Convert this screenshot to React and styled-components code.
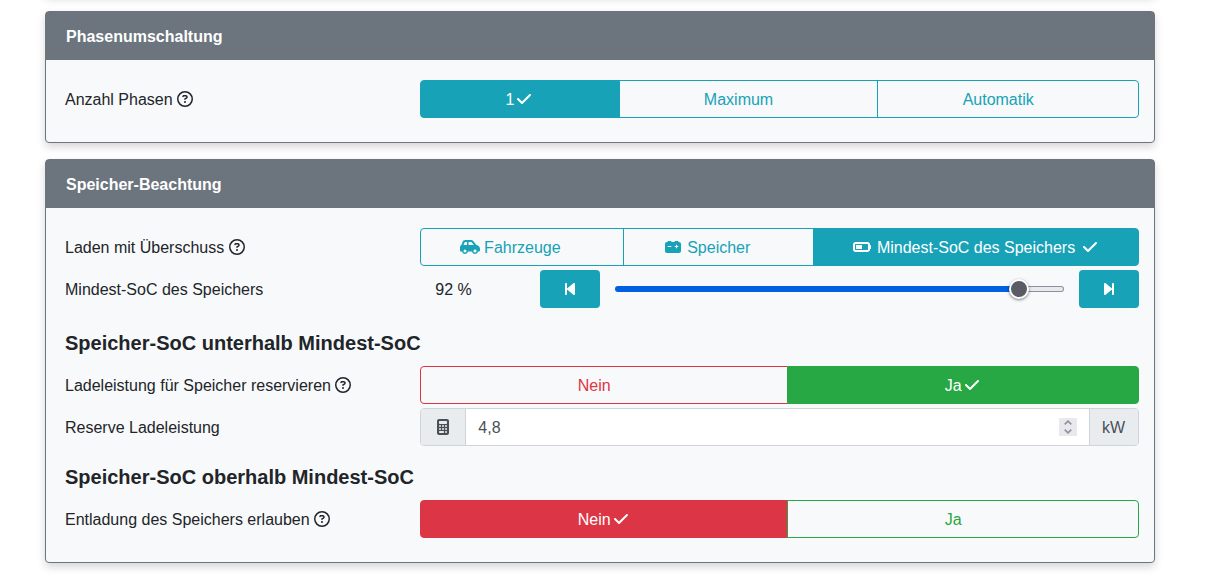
import React, { useState } from 'react';
import styled, { createGlobalStyle } from 'styled-components';
import {
    FaBackwardStep,
    FaBatteryHalf,
    FaCalculator,
    FaCarBattery,
    FaCarSide,
    FaCheck,
    FaForwardStep,
    FaRegCircleQuestion,
} from 'react-icons/fa6';

const GlobalStyle = createGlobalStyle`
    *, *::before, *::after {
        box-sizing: border-box;
    }
    body {
        margin: 0;
        background: #fff;
        color: #212529;
        font: 16px/24px "Liberation Sans", Arial, sans-serif;
        overflow: hidden;
    }
    button, input {
        font: inherit;
        margin: 0;
    }
`

const colors = {
    info: '#17a2b8',
    danger: '#dc3545',
    success: '#28a745',
}

const Page = styled.main`
    max-width: 1200px;
    padding: 0 45px;
`

const Card = styled.section`
    margin-bottom: 16px;
    border: 1px solid #6c757d;
    border-radius: 4px;
    background: #f8f9fa;
    box-shadow: 0 4px 8px rgba(0, 0, 0, 0.16);
`

const CardEnd = styled(Card)`
    height: 8px;
    margin-top: -13px;
`

const CardHeader = styled.h2`
    margin: 0;
    padding: 13px 20px 11px;
    background: #6c757d;
    color: #fff;
    font-size: 16px;
    line-height: 24px;
    font-weight: bold;
`

const CardBody = styled.div`
    padding: 20px 15px;
`

const Row = styled.div`
    display: grid;
    grid-template-columns: minmax(0, 1fr) minmax(0, 2fr);
    align-items: center;
    margin-bottom: ${props => props.$wide ? '8px' : '4px'};
`

const Label = styled.label`
    padding: 2px 4px 0;

    svg {
        vertical-align: -2px;
    }
`

const SubHeading = styled.h3`
    margin: 0;
    padding: 14px 4px 10px;
    font-size: 20px;
    line-height: 26px;
    font-weight: bold;
`

const ButtonGroup = styled.div`
    display: flex;
`

const ToggleButton = styled.button`
    flex: 1 1 auto;
    padding: 7px 12px 5px;
    border: 1px solid ${props => colors[props.$color]};
    background: ${props => props.$active ? colors[props.$color] : 'transparent'};
    color: ${props => props.$active ? '#fff' : colors[props.$color]};
    line-height: 24px;
    text-align: center;
    white-space: pre;
    cursor: pointer;

    &:not(:first-child) {
        margin-left: -1px;
    }
    &:first-child {
        border-radius: 4px 0 0 4px;
    }
    &:last-child {
        border-radius: 0 4px 4px 0;
    }
`

const Icon = styled.span`
    display: inline-flex;
    width: 20px;
    vertical-align: -2px;
    visibility: ${props => props.$hidden ? 'hidden' : 'visible'};

    svg {
        width: 20px;
        height: 16px;
    }
`

const RangeGroup = styled.div`
    display: grid;
    grid-template-columns: 2fr 1fr 8fr 1fr;
    align-items: center;
`

const RangeValue = styled.output`
    padding: 2px 15px 0;
`

const StepButton = styled.button`
    display: flex;
    align-items: center;
    justify-content: center;
    height: 38px;
    border: 0;
    border-radius: 4px;
    background: ${colors.info};
    color: #fff;
    cursor: pointer;
`

const RangeCell = styled.div`
    display: flex;
    padding: 0 15px;
`

const Range = styled.input`
    appearance: none;
    width: 100%;
    height: 24px;
    background: transparent;

    &::-webkit-slider-runnable-track {
        height: 6px;
        border: 1px solid transparent;
        border-radius: 3px;
        background:
            linear-gradient(#0060df, #0060df) 0 0 / var(--fill) 100% no-repeat border-box,
            linear-gradient(#e9e9ed, #e9e9ed) padding-box,
            linear-gradient(#8f8f9d, #8f8f9d) border-box;
    }
    &::-webkit-slider-thumb {
        appearance: none;
        width: 20px;
        height: 20px;
        margin-top: -8px;
        border: 2px solid #fff;
        border-radius: 50%;
        background: #5b5b66;
        box-shadow: 0 1px 3px rgba(0, 0, 0, 0.5);
    }
`

const InputGroup = styled.div`
    display: flex;
    height: 38px;
    border: 1px solid #ced4da;
    border-radius: 4px;
    background: #fff;
    color: #495057;
    overflow: hidden;
`

const Addon = styled.span`
    display: flex;
    align-items: center;
    padding: 0 12px;
    background: #e9ecef;

    &:first-child {
        border-right: 1px solid #ced4da;
    }
    &:last-child {
        min-width: 49px;
        padding-top: 2px;
        border-left: 1px solid #ced4da;
    }
`

const NumberInput = styled.input`
    flex: 1;
    min-width: 0;
    padding: 2px 12px 0;
    border: 0;
    outline: 0;
    background: transparent;
    color: inherit;
`

const Spinner = styled.div`
    display: flex;
    flex-direction: column;
    align-self: center;
    margin-right: 12px;
    background: #e9e9ed;
`

const SpinButton = styled.button`
    display: flex;
    align-items: center;
    justify-content: center;
    width: 18px;
    height: 9px;
    padding: 0;
    border: 0;
    background: transparent;
    color: #8f8f9d;
`

const Toggle = ({ label, options, initial }) => {
    const [selected, setSelected] = useState(initial)

    return (
        <ButtonGroup role="group" aria-label={label}>
            {options.map(({ text, color = 'info', icon: Glyph }, index) => (
                <ToggleButton
                    key={text}
                    type="button"
                    $color={color}
                    $active={index === selected}
                    aria-pressed={index === selected}
                    onClick={() => setSelected(index)}
                >
                    {Glyph && <Icon><Glyph /></Icon>}
                    {Glyph ? ` ${text} ` : text}
                    <Icon $hidden={index !== selected}><FaCheck /></Icon>
                </ToggleButton>
            ))}
        </ButtonGroup>
    )
}

const ToggleRow = ({ label, options, initial }) => (
    <Row>
        <Label as="div">{label} <FaRegCircleQuestion /></Label>
        <Toggle label={label} options={options} initial={initial} />
    </Row>
)

const RangeRow = () => {
    const [value, setValue] = useState(92)

    return (
        <Row $wide>
            <Label htmlFor="min-soc">Mindest-SoC des Speichers</Label>
            <RangeGroup>
                <RangeValue htmlFor="min-soc">{value} %</RangeValue>
                <StepButton type="button" aria-label="Weniger" onClick={() => setValue(Math.max(0, value - 1))}>
                    <FaBackwardStep />
                </StepButton>
                <RangeCell>
                    <Range
                        id="min-soc"
                        type="range"
                        min="0"
                        max="100"
                        value={value}
                        style={{ '--fill': `${value}%` }}
                        onChange={e => setValue(Number(e.target.value))}
                    />
                </RangeCell>
                <StepButton type="button" aria-label="Mehr" onClick={() => setValue(Math.min(100, value + 1))}>
                    <FaForwardStep />
                </StepButton>
            </RangeGroup>
        </Row>
    )
}

const PowerRow = () => {
    const [power, setPower] = useState('4,8')

    const step = (diff) => {
        const next = parseFloat(power.replace(',', '.')) + diff
        setPower(String(Math.round(next * 10) / 10).replace('.', ','))
    }

    return (
        <Row>
            <Label htmlFor="power">Reserve Ladeleistung</Label>
            <InputGroup>
                <Addon><Icon><FaCalculator /></Icon></Addon>
                <NumberInput id="power" inputMode="decimal" value={power} onChange={e => setPower(e.target.value)} />
                <Spinner>
                    <SpinButton type="button" aria-label="Erhöhen" onClick={() => step(0.1)}>
                        <svg width="8" height="5" viewBox="0 0 8 5" fill="none" stroke="currentColor" strokeWidth="1.6">
                            <path d="M0.7 4.3 4 1.2l3.3 3.1" />
                        </svg>
                    </SpinButton>
                    <SpinButton type="button" aria-label="Verringern" onClick={() => step(-0.1)}>
                        <svg width="8" height="5" viewBox="0 0 8 5" fill="none" stroke="currentColor" strokeWidth="1.6">
                            <path d="M0.7 0.7 4 3.8l3.3-3.1" />
                        </svg>
                    </SpinButton>
                </Spinner>
                <Addon>kW</Addon>
            </InputGroup>
        </Row>
    )
}

const phaseOptions = [{ text: '1' }, { text: 'Maximum' }, { text: 'Automatik' }]

const surplusOptions = [
    { text: 'Fahrzeuge', icon: FaCarSide },
    { text: 'Speicher', icon: FaCarBattery },
    { text: 'Mindest-SoC des Speichers', icon: FaBatteryHalf },
]

const yesNoOptions = [
    { text: 'Nein', color: 'danger' },
    { text: 'Ja', color: 'success' },
]

const App = () => {
    return (
        <>
            <GlobalStyle />
            <Page>
                <CardEnd aria-hidden="true" />
                <Card>
                    <CardHeader>Phasenumschaltung</CardHeader>
                    <CardBody>
                        <ToggleRow label="Anzahl Phasen" options={phaseOptions} initial={0} />
                    </CardBody>
                </Card>
                <Card>
                    <CardHeader>Speicher-Beachtung</CardHeader>
                    <CardBody>
                        <ToggleRow label="Laden mit Überschuss" options={surplusOptions} initial={2} />
                        <RangeRow />
                        <SubHeading>Speicher-SoC unterhalb Mindest-SoC</SubHeading>
                        <ToggleRow label="Ladeleistung für Speicher reservieren" options={yesNoOptions} initial={1} />
                        <PowerRow />
                        <SubHeading>Speicher-SoC oberhalb Mindest-SoC</SubHeading>
                        <ToggleRow label="Entladung des Speichers erlauben" options={yesNoOptions} initial={0} />
                    </CardBody>
                </Card>
            </Page>
        </>
    )
}

export default App
